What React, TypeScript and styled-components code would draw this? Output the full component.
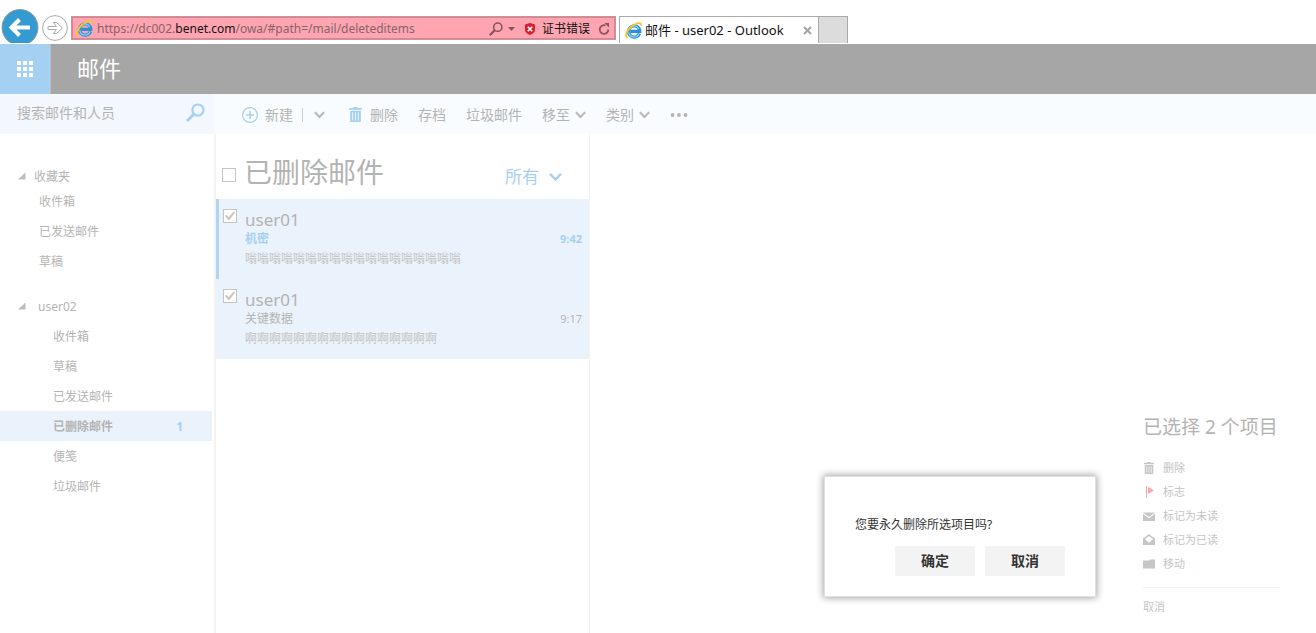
import React from 'react';
import styled, { createGlobalStyle, css } from 'styled-components';

const font = '"Noto Sans", "Noto Sans CJK SC", sans-serif';
const color = {
  blue: '#a6d0f2',
  text: '#b4b4b4',
  icon: '#c6c6c6',
  selected: '#eaf3fb',
  line: '#f3f3f3',
};

const GlobalStyle = createGlobalStyle`
  *, *::before, *::after { box-sizing: border-box; }
  body { margin: 0; background: #fff; font-family: ${font}; font-size: 12px; color: ${color.text}; }
  button, input { font: inherit; color: inherit; }
  button { border: 0; padding: 0; background: none; cursor: pointer; white-space: nowrap; }
  svg { display: block; flex: none; }
  h1, h2, p, ul { margin: 0; padding: 0; font-weight: 400; }
  ul { list-style: none; }
`;

const Page = styled.div`
  min-height: 100vh;
  display: flex;
  flex-direction: column;
`;

/* Browser frame */
const BrowserBar = styled.div`
  display: flex;
  align-items: flex-start;
  height: 43px;
  margin-bottom: 1px;
  overflow: hidden;
`;
const BackButton = styled.button`
  flex: none;
  width: 38px;
  height: 38px;
  margin: 9px 0 0 1px;
`;
const ForwardButton = styled.button`
  flex: none;
  width: 26px;
  height: 26px;
  margin: 15px 3px 0;
`;
const AddressBar = styled.div`
  flex: 0 1 545px;
  min-width: 0;
  display: flex;
  align-items: center;
  height: 24px;
  margin-top: 16px;
  padding: 1px 5px 0 4px;
  border: 1px solid #a9a2a4;
  background: #ffa5b1;
  box-shadow: inset 0 0 0 1px #fb7488;
  color: #111;
`;
const Url = styled.div`
  flex: 1;
  min-width: 0;
  margin-left: 4px;
  overflow: hidden;
  white-space: nowrap;
  line-height: 20px;
  color: #85646a;
  outline: none;
  strong { font-weight: 400; color: #111; }
`;
const AddressButton = styled.button`
  display: flex;
  align-items: center;
  gap: 5px;
  margin-left: 8px;
  line-height: 20px;
`;
const Tabs = styled.div`
  display: flex;
  height: 27px;
  margin: 16px 0 0 3px;
  color: #111;
`;
const Tab = styled.div`
  display: flex;
  align-items: center;
  width: 200px;
  padding: 0 6px 0 5px;
  border: 1px solid #aaa;
  border-bottom: 0;
`;
const TabTitle = styled.span`
  flex: 1;
  margin-left: 3px;
  font-size: 13px;
  line-height: 20px;
  white-space: nowrap;
`;
const NewTab = styled.button`
  width: 29px;
  border: solid #aaa;
  border-width: 1px 1px 0 0;
  background: #dcdcdc;
`;

/* Mail header */
const Header = styled.header`
  display: flex;
  align-items: center;
  height: 50px;
  background: #a6a6a6;
  color: #fff;
`;
const Launcher = styled.button`
  display: grid;
  place-items: center;
  width: 51px;
  height: 50px;
  border-right: 1px solid #bdbdbd;
  background: ${color.blue};
`;
const AppName = styled.h1`
  margin-left: 26px;
  padding-bottom: 2px;
  font-size: 22px;
  line-height: 30px;
`;

const Toolbar = styled.div`
  display: flex;
  height: 40px;
  background: #f8fcff;
  font-size: 14px;
`;
const Search = styled.form`
  display: flex;
  align-items: center;
  width: 214px;
  padding: 0 9px 4px 17px;
  background: #f2f8fd;
`;
const SearchInput = styled.input`
  flex: 1;
  min-width: 0;
  padding: 0;
  border: 0;
  outline: none;
  background: none;
  &::placeholder { color: ${color.text}; opacity: 1; }
`;
const Commands = styled.div`
  display: flex;
  align-items: center;
  gap: 20px;
  padding: 1px 0 0 28px;
`;
const Command = styled.button<{ $gap?: number }>`
  display: flex;
  align-items: center;
  gap: ${p => p.$gap ?? 5}px;
  line-height: 20px;
`;
const Split = styled.div`
  display: flex;
  align-items: center;
  padding-right: 3px;
`;
const Divider = styled.span`
  width: 1px;
  height: 14px;
  margin: 0 11px 0 9px;
  background: #ccc;
`;

/* Columns */
const Main = styled.div`
  flex: 1;
  display: flex;
`;
const Sidebar = styled.nav`
  width: 216px;
  padding: 32px 2px 30px 0;
  border-right: 2px solid ${color.line};
`;
const FolderGroup = styled.section`
  & + & { margin-top: 15px; }
`;
const GroupHeader = styled.button<{ $account?: boolean }>`
  display: flex;
  align-items: center;
  gap: ${p => (p.$account ? 12 : 8)}px;
  width: 100%;
  height: ${p => (p.$account ? 30 : 20)}px;
  padding-left: 18px;
`;
const Folder = styled.a<{ $nested?: boolean; $selected?: boolean }>`
  display: flex;
  justify-content: space-between;
  height: 30px;
  padding: 0 29px 0 ${p => (p.$nested ? 53 : 39)}px;
  line-height: 32px;
  color: inherit;
  text-decoration: none;
  ${p => p.$selected && css`
    background: ${color.selected};
    font-weight: 700;
  `}
`;
const Unread = styled.span`
  color: ${color.blue};
`;

const MessageList = styled.section`
  width: 374px;
  border-right: 1px solid ${color.line};
`;
const ListHeader = styled.div`
  display: flex;
  align-items: center;
  height: 65px;
  padding: 16px 27px 0 6px;
`;
const ListTitle = styled.h2`
  flex: 1;
  margin-left: 8px;
  padding-bottom: 6px;
  font-size: 28px;
  line-height: 36px;
`;
const Filter = styled.button`
  display: flex;
  align-items: center;
  gap: 10px;
  padding-top: 4px;
  font-size: 17px;
  line-height: 24px;
  color: ${color.blue};
`;
const Check = styled.input`
  appearance: none;
  flex: none;
  width: 14px;
  height: 14px;
  margin: 0;
  border: 1px solid #c4c4c4;
  background: #fff;
  &:checked {
    display: grid;
    place-items: center;
  }
  &:checked::before {
    content: "";
    width: 10px;
    height: 9px;
    background: #c4c4c4;
    clip-path: polygon(0 50%, 14% 36%, 36% 64%, 86% 0, 100% 12%, 38% 100%);
  }
`;
const Message = styled.li<{ $focused?: boolean }>`
  display: flex;
  gap: 8px;
  height: 80px;
  padding: 10px 7px 0 4px;
  border-left: 3px solid ${p => (p.$focused ? '#b0d4f1' : color.selected)};
  background: ${color.selected};
`;
const MessageBody = styled.div`
  flex: 1;
  min-width: 0;
`;
const Sender = styled.p`
  padding-top: 1px;
  font-size: 17px;
  line-height: 20px;
`;
const SubjectRow = styled.div<{ $unread?: boolean }>`
  display: flex;
  justify-content: space-between;
  line-height: 18px;
  ${p => p.$unread && css`
    color: ${color.blue};
    font-weight: 700;
  `}
`;
const Time = styled.time`
  font-size: 11px;
`;
const Preview = styled.p`
  line-height: 22px;
  color: #c4c4c4;
`;

const ReadingPane = styled.main`
  position: relative;
  flex: 1;
  display: flex;
  justify-content: flex-end;
  align-items: flex-end;
  padding: 0 36px 16px;
`;
const Selection = styled.section`
  min-width: 137px;
  font-size: 11px;
  line-height: 20px;
  color: #c4c4c4;
`;
const SelectionTitle = styled.h2`
  margin-bottom: 15px;
  font-size: 19px;
  line-height: 28px;
  color: ${color.text};
`;
const Action = styled.button`
  display: flex;
  align-items: center;
  gap: 8px;
  height: 24px;
`;
const CancelRow = styled.div`
  margin-top: 11px;
  padding-top: 9px;
  border-top: 1px solid ${color.line};
`;

const Dialog = styled.div`
  position: absolute;
  right: 220px;
  bottom: 36px;
  width: 272px;
  padding: 38px 30px 20px;
  border: 1px solid #dedede;
  background: #fff;
  box-shadow: 0 0 7px 1px rgba(0, 0, 0, 0.36);
  color: #333;
`;
const DialogText = styled.p`
  line-height: 20px;
`;
const DialogButtons = styled.div`
  display: flex;
  justify-content: flex-end;
  gap: 10px;
  margin-top: 11px;
`;
const DialogButton = styled.button`
  width: 80px;
  height: 30px;
  background: #f3f3f3;
  font-size: 14px;
  font-weight: 700;
  line-height: 20px;
`;

/* Icons */
const IeLogo = () => (
  <svg width="17" height="17" viewBox="0 0 16 16" fill="none">
    <path d="M13.600 10.700A5.300 5.300 0 1 1 13.900 8.800H5" stroke="#2a8fd6" strokeWidth="3" />
    <path d="M13.200 10.800A5 5 0 0 1 3.500 9.500M4 6.500A5 5 0 0 1 13 6.500" stroke="#7fcdf5" strokeWidth="1.200" />
    <path d="M2.400 15C-1 13.500 2 6.500 8 3C12 .600 15.600.200 15 3.500" stroke="#fbc32a" strokeWidth="1.700" />
  </svg>
);
const Chevron = ({ stroke = '#b8b8b8', size = 11 }: { stroke?: string; size?: number }) => (
  <svg width={size} height={size} viewBox="0 0 10 10" fill="none" stroke={stroke} strokeWidth="1.8">
    <path d="M.8 3L5 7.300L9.200 3" />
  </svg>
);
const Trash = ({ size, fill }: { size: number; fill: string }) => (
  <svg width={size} height={size} viewBox="0 0 14 14" fill={fill}>
    <path d="M5 0h4v1h4v1.500H1V1h4z" />
    <path fillRule="evenodd" d="M2 3.500h10V14H2zM4 5v7.500h.8V5zM6.600 5v7.500h.8V5zM9.200 5v7.500h.8V5z" />
  </svg>
);
const Flag = () => (
  <svg width="12" height="12" viewBox="0 0 12 12">
    <path d="M3 0h1v12H3z" fill="#f3a5ad" />
    <path d="M5 .800l6 3.600L5 8z" fill="#f8a5ae" />
  </svg>
);
const Envelope = () => (
  <svg width="12" height="12" viewBox="0 0 12 12" fill={color.icon}>
    <path d="M0 2.500h12L6 7z" />
    <path d="M0 3.800l6 4.500l6-4.500V11H0z" />
  </svg>
);
const OpenEnvelope = () => (
  <svg width="12" height="12" viewBox="0 0 12 12" fill={color.icon}>
    <path fillRule="evenodd" d="M0 4.500L6 0l6 4.500V11H0zM2 5.300l4 3.400l4-3.400L6 2z" />
  </svg>
);
const FolderIcon = () => (
  <svg width="12" height="12" viewBox="0 0 12 12" fill={color.icon}>
    <path d="M0 2.500h6l1.500-1H12V10.500H0z" />
  </svg>
);
const Triangle = () => (
  <svg width="8" height="8" viewBox="0 0 8 8" fill="#bdbdbd">
    <path d="M7.500.500V7.500H0z" />
  </svg>
);
const Magnifier = ({ size, stroke }: { size: number; stroke: string }) => (
  <svg width={size} height={size} viewBox="0 0 18 18" fill="none" stroke={stroke}>
    <circle cx="11.300" cy="6.700" r="5.300" strokeWidth="2" />
    <path d="M7.400 10.600L1 17" strokeWidth="2.800" />
  </svg>
);

const favourites = ['收件箱', '已发送邮件', '草稿'];
const folders = ['收件箱', '草稿', '已发送邮件', '已删除邮件', '便笺', '垃圾邮件'];
const messages = [
  { from: 'user01', subject: '机密', time: '9:42', preview: '嗡'.repeat(18), unread: true },
  { from: 'user01', subject: '关键数据', time: '9:17', preview: '啊'.repeat(16), unread: false },
];
const actions = [
  { label: '删除', icon: <Trash size={12} fill={color.icon} /> },
  { label: '标志', icon: <Flag /> },
  { label: '标记为未读', icon: <Envelope /> },
  { label: '标记为已读', icon: <OpenEnvelope /> },
  { label: '移动', icon: <FolderIcon /> },
];

export default function App() {
  return (
    <Page>
      <GlobalStyle />
      <BrowserBar>
        <BackButton aria-label="后退">
          <svg width="38" height="38" viewBox="0 0 38 38" fill="none">
            <circle cx="19" cy="18.500" r="18" fill="#349bd2" stroke="#96999b" />
            <path d="M29 18.500H11M18.500 10.500l-8 8l8 8" stroke="#fff" strokeWidth="4" />
          </svg>
        </BackButton>
        <ForwardButton aria-label="前进">
          <svg width="26" height="26" viewBox="0 0 26 26" fill="none" stroke="#a9a9a9">
            <circle cx="13" cy="13" r="12.400" />
            <path d="M6 11.500h8.500l-3-4h3L20.500 13l-6 5.500h-3l3-4H6z" />
          </svg>
        </ForwardButton>
        <AddressBar>
          <IeLogo />
          <Url role="textbox" aria-label="地址" contentEditable suppressContentEditableWarning spellCheck={false}>
            https://dc002.<strong>benet.com</strong>/owa/#path=/mail/deleteditems
          </Url>
          <AddressButton aria-label="搜索">
            <Magnifier size={14} stroke="#85545c" />
            <svg width="7" height="4" viewBox="0 0 7 4" fill="#85545c"><path d="M0 0h7L3.500 4z" /></svg>
          </AddressButton>
          <AddressButton>
            <svg width="14" height="14" viewBox="0 0 14 14">
              <path d="M7 1l5 1.500v5.500c0 2.500-2.500 4-5 5c-2.500-1-5-2.500-5-5V2.500z" fill="#d5222d" />
              <path d="M4.800 4.800l4.400 4.400M9.200 4.800L4.800 9.200" stroke="#fff" strokeWidth="1.600" />
            </svg>
            证书错误
          </AddressButton>
          <AddressButton aria-label="刷新">
            <svg width="12" height="12" viewBox="0 0 12 12" fill="none">
              <path d="M10.300 6.500A4.300 4.300 0 1 1 7.500 2.500" stroke="#85545c" strokeWidth="1.800" />
              <path d="M6.500 0h4.500v4.500z" fill="#85545c" />
            </svg>
          </AddressButton>
        </AddressBar>
        <Tabs>
          <Tab>
            <IeLogo />
            <TabTitle>邮件 - user02 - Outlook</TabTitle>
            <button aria-label="关闭选项卡">
              <svg width="9" height="9" viewBox="0 0 9 9" stroke="#a6a6a6" strokeWidth="2">
                <path d="M1 1l7 7M8 1L1 8" />
              </svg>
            </button>
          </Tab>
          <NewTab aria-label="新建选项卡" />
        </Tabs>
      </BrowserBar>

      <Header>
        <Launcher aria-label="应用启动器">
          <svg width="16" height="16" viewBox="0 0 16 16" fill="#fff">
            {[0, 6, 12].map(y => [0, 6, 12].map(x => <rect key={`${x}-${y}`} x={x} y={y} width="4" height="4" />))}
          </svg>
        </Launcher>
        <AppName>邮件</AppName>
      </Header>

      <Toolbar>
        <Search>
          <SearchInput aria-label="搜索邮件和人员" placeholder="搜索邮件和人员" />
          <button type="button" aria-label="搜索"><Magnifier size={19} stroke={color.blue} /></button>
        </Search>
        <Commands>
          <Split>
            <Command $gap={7}>
              <svg width="16" height="16" viewBox="0 0 16 16" fill="none" stroke={color.blue}>
                <circle cx="8" cy="8" r="7.400" strokeWidth="1.200" />
                <path d="M8 4v8M4 8h8" strokeWidth="1.600" />
              </svg>
              新建
            </Command>
            <Divider />
            <Command aria-label="更多新建选项"><Chevron /></Command>
          </Split>
          <Command $gap={7}><Trash size={15} fill={color.blue} />删除</Command>
          <Command>存档</Command>
          <Command>垃圾邮件</Command>
          <Command>移至<Chevron /></Command>
          <Command>类别<Chevron /></Command>
          <Command aria-label="更多命令">
            <svg width="18" height="4" viewBox="0 0 18 4" fill="#b4b4b4">
              <circle cx="2.500" cy="2" r="1.900" /><circle cx="9" cy="2" r="1.900" /><circle cx="15.500" cy="2" r="1.900" />
            </svg>
          </Command>
        </Commands>
      </Toolbar>

      <Main>
        <Sidebar>
          <FolderGroup>
            <GroupHeader><Triangle />收藏夹</GroupHeader>
            {favourites.map(name => <Folder key={name} href="#">{name}</Folder>)}
          </FolderGroup>
          <FolderGroup>
            <GroupHeader $account><Triangle />user02</GroupHeader>
            {folders.map(name => (
              <Folder key={name} href="#" $nested $selected={name === '已删除邮件'}>
                {name}
                {name === '已删除邮件' && <Unread>1</Unread>}
              </Folder>
            ))}
          </FolderGroup>
        </Sidebar>

        <MessageList>
          <ListHeader>
            <Check type="checkbox" aria-label="全选" />
            <ListTitle>已删除邮件</ListTitle>
            <Filter>所有<Chevron stroke={color.blue} size={13} /></Filter>
          </ListHeader>
          <ul>
            {messages.map(m => (
              <Message key={m.time} $focused={m.unread}>
                <Check type="checkbox" defaultChecked aria-label={m.subject} />
                <MessageBody>
                  <Sender>{m.from}</Sender>
                  <SubjectRow $unread={m.unread}>
                    <span>{m.subject}</span>
                    <Time>{m.time}</Time>
                  </SubjectRow>
                  <Preview>{m.preview}</Preview>
                </MessageBody>
              </Message>
            ))}
          </ul>
        </MessageList>

        <ReadingPane>
          <Selection>
            <SelectionTitle>已选择 2 个项目</SelectionTitle>
            {actions.map(a => <Action key={a.label}>{a.icon}{a.label}</Action>)}
            <CancelRow><button>取消</button></CancelRow>
          </Selection>
          <Dialog role="dialog" aria-label="确认删除">
            <DialogText>您要永久删除所选项目吗?</DialogText>
            <DialogButtons>
              <DialogButton>确定</DialogButton>
              <DialogButton>取消</DialogButton>
            </DialogButtons>
          </Dialog>
        </ReadingPane>
      </Main>
    </Page>
  );
}
